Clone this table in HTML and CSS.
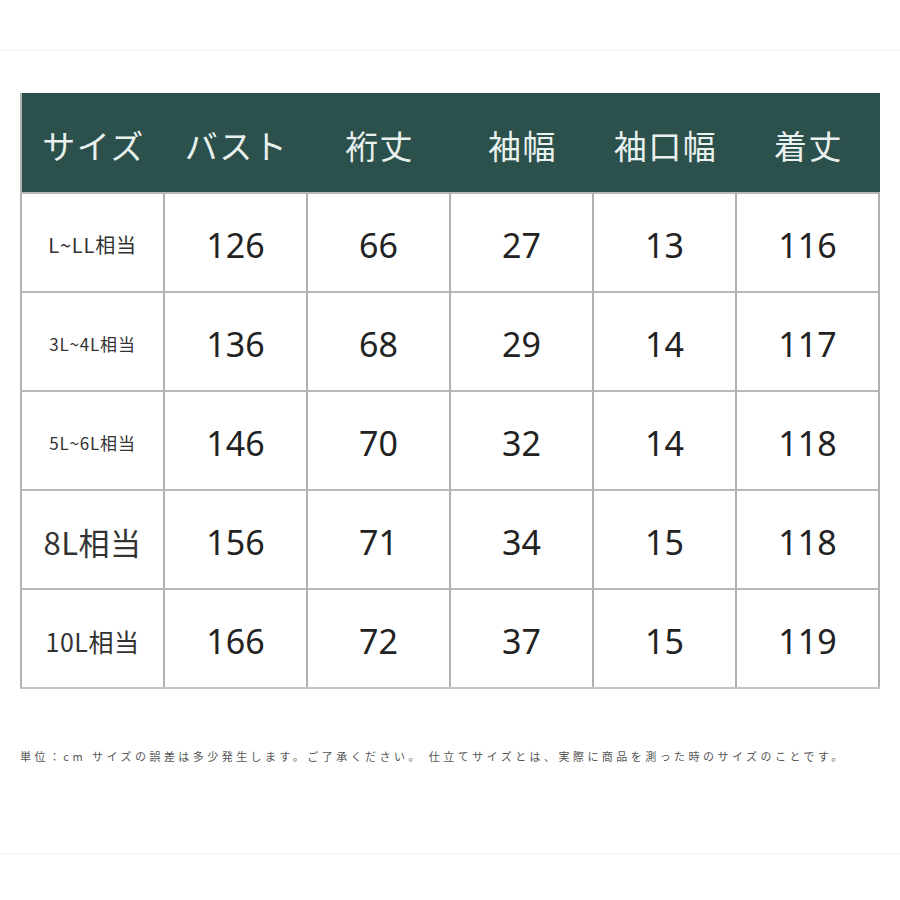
FILE: index.html
```html
<!DOCTYPE html>
<html lang="ja">
<head>
<meta charset="utf-8">
<title>サイズ表</title>
<link rel="stylesheet" href="styles.css">
</head>
<body>
<div class="page">
  <div class="sheet">
    <div class="table">
      <div class="hcell">サイズ</div>
      <div class="hcell">バスト</div>
      <div class="hcell">裄丈</div>
      <div class="hcell">袖幅</div>
      <div class="hcell">袖口幅</div>
      <div class="hcell">着丈</div>

      <div class="cell label s18">L~LL相当</div>
      <div class="cell">126</div><div class="cell">66</div><div class="cell">27</div><div class="cell">13</div><div class="cell">116</div>

      <div class="cell label s15">3L~4L相当</div>
      <div class="cell">136</div><div class="cell">68</div><div class="cell">29</div><div class="cell">14</div><div class="cell">117</div>

      <div class="cell label s15">5L~6L相当</div>
      <div class="cell">146</div><div class="cell">70</div><div class="cell">32</div><div class="cell">14</div><div class="cell">118</div>

      <div class="cell label s28">8L相当</div>
      <div class="cell">156</div><div class="cell">71</div><div class="cell">34</div><div class="cell">15</div><div class="cell">118</div>

      <div class="cell label s24">10L相当</div>
      <div class="cell">166</div><div class="cell">72</div><div class="cell">37</div><div class="cell">15</div><div class="cell">119</div>
    </div>
    <p class="note">単位：cm サイズの誤差は多少発生します。ご了承ください。 仕立てサイズとは、実際に商品を測った時のサイズのことです。</p>
  </div>
</div>
</body>
</html>
```

FILE: styles.css
```css
html, body {
  margin: 0;
  padding: 0;
  background: #ffffff;
}

body {
  font-family: "Noto Sans CJK JP", "Noto Sans", sans-serif;
  color: #222;
}

.page {
  width: 900px;
  height: 900px;
  padding-top: 50px;
  box-sizing: border-box;
}

.sheet {
  border-top: 1px solid #f4f4f4;
  border-bottom: 1px solid #f2f2f2;
  height: 804px;
  box-sizing: border-box;
  padding: 42px 20px 0 20px;
}

.table {
  display: grid;
  grid-template-columns: repeat(6, 1fr);
  grid-template-rows: 99px repeat(5, 99px);
  width: 860px;
  border-left: 2px solid #b4b4b4;
  border-bottom: 2px solid #c4c4c4;
  box-sizing: border-box;
}

.hcell {
  background: #2c504b;
  color: #e9f1ef;
  font-size: 33px;
  display: flex;
  align-items: center;
  justify-content: center;
  letter-spacing: 1.5px;
  padding-top: 4px;
}

.hcell:last-of-type {
  border-right: 2px solid #8a9a97;
}

.cell {
  display: flex;
  align-items: center;
  justify-content: center;
  border-right: 2px solid #b0b0b0;
  border-top: 2px solid #b8b8b8;
  font-family: "Noto Sans", sans-serif;
  font-size: 34px;
  color: #222;
  padding-top: 4px;
}

.label {
  font-family: "Noto Sans CJK JP", sans-serif;
  color: #333;
}

.s18 { font-size: 20px; letter-spacing: 0.8px; }
.s15 { font-size: 17px; letter-spacing: 0.8px; }
.s28 { font-size: 31px; letter-spacing: 0.5px; }
.s24 { font-size: 25px; letter-spacing: 0.5px; }

.note {
  margin: 59px 0 0 0;
  font-size: 11px;
  letter-spacing: 3.45px;
  color: #555;
  white-space: nowrap;
}
```
